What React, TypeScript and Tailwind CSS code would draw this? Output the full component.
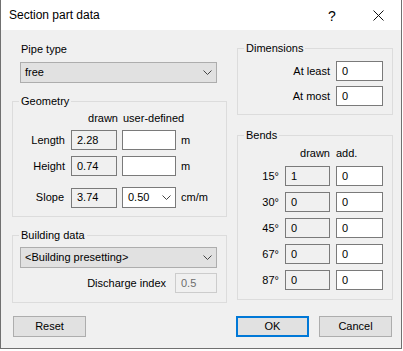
import type { ReactNode } from "react";

function Chevron() {
  return (
    <svg width="9" height="5" viewBox="0 0 9 5" className="shrink-0">
      <polyline points="0.5,0.5 4.5,4.5 8.5,0.5" fill="none" stroke="#444" strokeWidth="1" />
    </svg>
  );
}

function Group({ title, className, children }: { title: string; className?: string; children: ReactNode }) {
  return (
    <fieldset className={`border border-[#dcdcdc] ${className ?? ""}`}>
      <legend className="ml-[6px] px-[2px] leading-[13px]">{title}</legend>
      {children}
    </fieldset>
  );
}

function Edit({ value = "", w, gray }: { value?: string; w: string; gray?: boolean }) {
  return (
    <div
      className={`h-[20px] ${w} shrink-0 border border-[#7a7a7a] ${gray ? "bg-[#f0f0f0]" : "bg-white"} pl-[5px] flex items-center leading-none`}
    >
      {value}
    </div>
  );
}

function Combo({ value }: { value: string }) {
  return (
    <div className="h-[21px] w-[197px] ml-[8px] border border-[#adadad] bg-[#e1e1e1] pl-[4px] pr-[4px] flex items-center justify-between">
      <span>{value}</span>
      <Chevron />
    </div>
  );
}

function Button({ label, primary }: { label: string; primary?: boolean }) {
  return (
    <div
      className={`h-[21px] w-[73px] flex items-center justify-center bg-[#e1e1e1] ${
        primary ? "border-2 border-[#0078d7]" : "border border-[#adadad]"
      }`}
    >
      {label}
    </div>
  );
}

const bends = [
  ["15°", "1"],
  ["30°", "0"],
  ["45°", "0"],
  ["67°", "0"],
  ["87°", "0"],
];

export default function App() {
  return (
    <div className="w-[403px] h-[351px] bg-white font-['Liberation_Sans',Arial,sans-serif] text-[11px] text-black">
      <div className="w-[402px] h-[349px] border-x border-b border-[#707070] flex flex-col">
        {/* title bar */}
        <div className="h-[30px] bg-white flex items-center shrink-0">
          <span className="pl-[8px] text-[12px] flex-1">Section part data</span>
          <span className="w-[46px] text-center text-[14px] leading-none pt-[1px]">?</span>
          <span className="w-[46px] flex justify-center pl-[1px]">
            <svg width="11" height="11" viewBox="0 0 11 11">
              <path d="M0.5 0.5 L10.5 10.5 M10.5 0.5 L0.5 10.5" stroke="#111" strokeWidth="1" />
            </svg>
          </span>
        </div>

        <div className="flex-1 bg-[#f0f0f0]">
          <div className="flex items-start pl-[11px] gap-[10px]">
            {/* left column */}
            <div className="w-[215px] flex flex-col">
              <div className="mt-[13px] pl-[9px] leading-[13px]">Pipe type</div>
              <div className="mt-[6px]">
                <Combo value="free" />
              </div>

              <Group title="Geometry" className="mt-[12px] pb-[8px]">
                <div className="mt-[4px] flex leading-[13px]">
                  <span className="w-[105px] text-right">drawn</span>
                  <span className="ml-[5px]">user-defined</span>
                </div>
                {[
                  ["Length", "2.28", "m", "mt-[5px]"],
                  ["Height", "0.74", "m", "mt-[6px]"],
                ].map(([label, drawn, unit, mt]) => (
                  <div key={label} className={`${mt} flex items-center`}>
                    <span className="w-[52px] text-right">{label}</span>
                    <div className="ml-[6px]">
                      <Edit value={drawn} w="w-[46px]" gray />
                    </div>
                    <div className="ml-[5px]">
                      <Edit w="w-[54px]" />
                    </div>
                    <span className="ml-[5px]">{unit}</span>
                  </div>
                ))}
                <div className="mt-[11px] flex items-center">
                  <span className="w-[51px] text-right">Slope</span>
                  <div className="ml-[7px] h-[21px] flex items-center">
                    <Edit value="3.74" w="w-[46px]" gray />
                  </div>
                  <div className="ml-[5px] h-[21px] w-[54px] border border-[#7a7a7a] bg-white pl-[5px] pr-[4px] flex items-center justify-between">
                    <span>0.50</span>
                    <Chevron />
                  </div>
                  <span className="ml-[5px]">cm/m</span>
                </div>
              </Group>

              <Group title="Building data" className="mt-[12px] pb-[9px]">
                <div className="mt-[5px] -ml-[1px]">
                  <Combo value="<Building presetting>" />
                </div>
                <div className="mt-[5px] flex items-center justify-end pr-[9px]">
                  <span>Discharge index</span>
                  <div className="ml-[9px] h-[20px] w-[42px] border border-[#cccccc] bg-[#f0f0f0] text-[#6d6d6d] pl-[5px] flex items-center">
                    0.5
                  </div>
                </div>
              </Group>
            </div>

            {/* right column */}
            <div className="w-[156px] flex flex-col">
              <Group title="Dimensions" className="mt-[12px] pb-[8px]">
                {[
                  ["At least", "mt-[6px]"],
                  ["At most", "mt-[5px]"],
                ].map(([label, mt]) => (
                  <div key={label} className={`${mt} flex items-center justify-end pr-[9px]`}>
                    <span>{label}</span>
                    <div className="ml-[6px]">
                      <Edit value="0" w="w-[47px]" />
                    </div>
                  </div>
                ))}
              </Group>

              <Group title="Bends" className="mt-[14px] pb-[9px]">
                <div className="mt-[5px] flex leading-[13px] pr-[9px] justify-end">
                  <span className="w-[45px] text-right">drawn</span>
                  <span className="w-[47px] ml-[6px]">add.</span>
                </div>
                <div className="mt-[6px] flex flex-col gap-[6px]">
                  {bends.map(([deg, drawn]) => (
                    <div key={deg} className="flex items-center justify-end pr-[9px]">
                      <span>{deg}</span>
                      <div className="ml-[6px]">
                        <Edit value={drawn} w="w-[45px]" gray />
                      </div>
                      <div className="ml-[6px]">
                        <Edit value="0" w="w-[47px]" />
                      </div>
                    </div>
                  ))}
                </div>
              </Group>
            </div>
          </div>

          <div className="mt-[13px] flex items-center pl-[12px] pr-[9px]">
            <Button label="Reset" />
            <div className="flex-1" />
            <Button label="OK" primary />
            <div className="ml-[10px]">
              <Button label="Cancel" />
            </div>
          </div>
        </div>
      </div>
    </div>
  );
}
